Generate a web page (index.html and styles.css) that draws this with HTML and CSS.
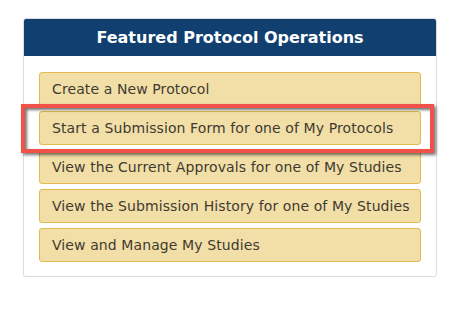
FILE: index.html
```html
<!DOCTYPE html>
<html>
<head>
<meta charset="utf-8">
<link rel="stylesheet" href="styles.css">
</head>
<body>
<div class="card">
  <div class="card-header">Featured Protocol Operations</div>
  <div class="card-body">
    <a class="op">Create a New Protocol</a>
    <a class="op">Start a Submission Form for one of My Protocols</a>
    <a class="op">View the Current Approvals for one of My Studies</a>
    <a class="op">View the Submission History for one of My Studies</a>
    <a class="op">View and Manage My Studies</a>
  </div>
  <div class="highlight"></div>
</div>
</body>
</html>
```

FILE: styles.css
```css
html, body {
  margin: 0;
  padding: 0;
  background: #ffffff;
}
body {
  padding: 18px 20px 0 23px;
  font-family: "DejaVu Sans", Verdana, sans-serif;
}
.card {
  position: relative;
  width: 412px;
  border: 1px solid #dcdcdc;
  border-radius: 3px;
  background: #fff;
  box-shadow: 0 1px 1px rgba(0,0,0,0.05);
}
.card-header {
  background: #113f6f;
  color: #fff;
  font-weight: bold;
  font-size: 16px;
  text-align: center;
  height: 37px;
  line-height: 38px;
  border-radius: 2px 2px 0 0;
}
.card-body {
  display: flex;
  flex-direction: column;
  gap: 5px;
  padding: 16px 15px 14px 15px;
}
.op {
  display: block;
  box-sizing: border-box;
  height: 34px;
  line-height: 32px;
  padding: 0 12px;
  background: #f2dfa8;
  border: 1px solid #e2bb4c;
  border-radius: 3px;
  color: #3f3a30;
  font-size: 14px;
  letter-spacing: 0.1px;
  white-space: nowrap;
}
.highlight {
  position: absolute;
  left: -3px;
  top: 85px;
  width: 413px;
  height: 49px;
  box-sizing: border-box;
  border: 4px solid #f0524a;
  box-shadow: 2px 2px 3px rgba(0,0,0,0.55), inset 2px 2px 3px rgba(0,0,0,0.55);
}
```
